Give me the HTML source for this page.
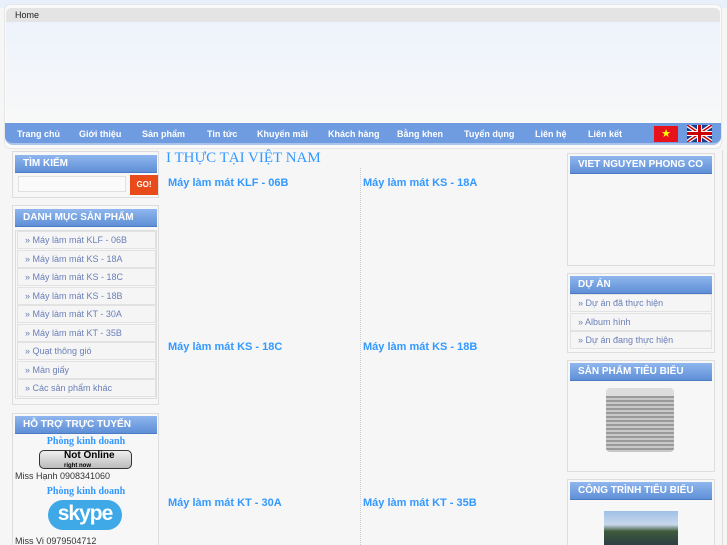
<!DOCTYPE html><html><head><meta charset="utf-8"><style>
*{margin:0;padding:0;box-sizing:border-box}
html,body{width:727px;height:545px;overflow:hidden}
body{background:#f6f6f6;font-family:"Liberation Sans",sans-serif;position:relative}
.a{position:absolute}
.hd{position:absolute;height:18px;background:linear-gradient(#8fb6ee,#5f8fd6);color:#fff;font-weight:bold;font-size:10px;padding:3px 0 0 8px;border-bottom:1px solid #4a7bc4}
.box{position:absolute;border:1px solid #ddd;background:#f7f7f7}
.it{position:absolute;height:18px;border:1px solid #e2e2e2;color:#6a7fb8;font-size:9px;padding:3px 0 0 7px;background:#f5f5f5}
.nav span{position:absolute;top:6px;color:#fff;font-size:9px;font-weight:bold}
.p{position:absolute;color:#3399ff;font-weight:bold;font-size:11px}
</style></head><body>
<div class="a" style="left:0;top:0;width:727px;height:8px;background:#e8f0fb"></div>
<div class="a" style="left:4px;top:4px;width:718px;height:145px;border:1px solid #e6e6e6;border-radius:6px;background:#fafafa"></div>
<div class="a" style="left:6px;top:8px;width:714px;height:14px;background:#e4e4e4;border-radius:5px 5px 0 0;font-size:9px;padding:2px 0 0 9px;color:#222">Home</div>
<div class="a" style="left:6px;top:22px;width:714px;height:100px;background:linear-gradient(#edf3fc,#f8f8f8)"></div>
<div class="a nav" style="left:5px;top:123px;width:716px;height:22px;background:#6f9be0;border-radius:0 0 8px 8px;border-bottom:2px solid #a9c3ea">
<span style="left:12px">Trang chủ</span><span style="left:74px">Giới thiệu</span><span style="left:137px">Sản phẩm</span><span style="left:202px">Tin tức</span><span style="left:252px">Khuyến mãi</span><span style="left:323px">Khách hàng</span><span style="left:392px">Bằng khen</span><span style="left:459px">Tuyển dụng</span><span style="left:530px">Liên hệ</span><span style="left:583px">Liên kết</span>
<div class="a" style="left:649px;top:3px;width:24px;height:16px;background:#e8121b;color:#ff0;font-size:11px;text-align:center;line-height:16px">★</div>
<svg class="a" style="left:682px;top:2px" width="25" height="17" viewBox="0 0 25 17"><rect width="25" height="17" fill="#1e3a8a"/><path d="M0 0L25 17M25 0L0 17" stroke="#fff" stroke-width="4"/><path d="M0 0L25 17M25 0L0 17" stroke="#c00" stroke-width="1.5"/><path d="M12.5 0V17M0 8.5H25" stroke="#fff" stroke-width="5"/><path d="M12.5 0V17M0 8.5H25" stroke="#c00" stroke-width="3"/></svg>
</div>
<div class="a" style="left:722px;top:150px;width:1px;height:395px;background:#ddd"></div>
<div class="box" style="left:12px;top:151px;width:147px;height:47px"></div>
<div class="hd" style="left:15px;top:155px;width:142px">TÌM KIẾM</div>
<div class="a" style="left:18px;top:176px;width:108px;height:16px;border:1px solid #e0e0e0;background:#fafafa"></div>
<div class="a" style="left:130px;top:175px;width:28px;height:20px;background:#e84a1a;color:#fff;font-size:8px;font-weight:bold;text-align:center;line-height:20px">GO!</div>
<div class="box" style="left:12px;top:205px;width:147px;height:200px"></div>
<div class="hd" style="left:15px;top:209px;width:142px">DANH MỤC SẢN PHẨM</div>
<div class="a" style="left:15px;top:230px;width:142px;height:169px;border:1px solid #ddd"></div>
<div class="it" style="left:17px;top:231px;width:139px">» Máy làm mát KLF - 06B</div>
<div class="it" style="left:17px;top:249.5px;width:139px">» Máy làm mát KS - 18A</div>
<div class="it" style="left:17px;top:268px;width:139px">» Máy làm mát KS - 18C</div>
<div class="it" style="left:17px;top:286.5px;width:139px">» Máy làm mát KS - 18B</div>
<div class="it" style="left:17px;top:305px;width:139px">» Máy làm mát KT - 30A</div>
<div class="it" style="left:17px;top:323.5px;width:139px">» Máy làm mát KT - 35B</div>
<div class="it" style="left:17px;top:342px;width:139px">» Quạt thông gió</div>
<div class="it" style="left:17px;top:360.5px;width:139px">» Màn giấy</div>
<div class="it" style="left:17px;top:379px;width:139px">» Các sản phẩm khác</div>
<div class="box" style="left:12px;top:413px;width:147px;height:140px"></div>
<div class="hd" style="left:15px;top:416px;width:142px">HỖ TRỢ TRỰC TUYẾN</div>
<div class="a" style="left:15px;top:436px;width:142px;text-align:center;font-family:'Liberation Serif',serif;font-weight:bold;font-size:10px;color:#3399ff">Phòng kinh doanh</div>
<div class="a" style="left:39px;top:450px;width:93px;height:19px;border:1px solid #333;border-radius:5px;background:linear-gradient(#eee,#bbb);font-size:10px;font-weight:bold;padding:0 0 0 24px;line-height:9px;color:#000">Not Online<br><span style="font-size:6px">right now</span></div>
<div class="a" style="left:15px;top:471px;font-size:9px;color:#333">Miss Hạnh 0908341060</div>
<div class="a" style="left:15px;top:486px;width:142px;text-align:center;font-family:'Liberation Serif',serif;font-weight:bold;font-size:10px;color:#3399ff">Phòng kinh doanh</div>
<div class="a" style="left:48px;top:500px;width:74px;height:30px;border-radius:15px;background:#3fa9e8;color:#fff;font-weight:bold;font-size:21px;text-align:center;line-height:28px;letter-spacing:-1px">skype</div>
<div class="a" style="left:15px;top:536px;font-size:9px;color:#333">Miss Vi 0979504712</div>
<div class="a" style="left:166px;top:150px;font-family:'Liberation Serif',serif;font-size:15px;color:#3399ff">I THỰC TẠI VIỆT NAM</div>
<div class="a" style="left:360px;top:168px;height:377px;border-left:1px dotted #ccc"></div>
<div class="p" style="left:168px;top:177px">Máy làm mát KLF - 06B</div>
<div class="p" style="left:363px;top:177px">Máy làm mát KS - 18A</div>
<div class="p" style="left:168px;top:341px">Máy làm mát KS - 18C</div>
<div class="p" style="left:363px;top:341px">Máy làm mát KS - 18B</div>
<div class="p" style="left:168px;top:497px">Máy làm mát KT - 30A</div>
<div class="p" style="left:363px;top:497px">Máy làm mát KT - 35B</div>
<div class="box" style="left:567px;top:153px;width:148px;height:113px"></div>
<div class="hd" style="left:570px;top:156px;width:142px">VIET NGUYEN PHONG CO</div>
<div class="box" style="left:567px;top:273px;width:148px;height:80px"></div>
<div class="hd" style="left:570px;top:276px;width:142px">DỰ ÁN</div>
<div class="it" style="left:570px;top:294px;width:142px">» Dự án đã thực hiện</div>
<div class="it" style="left:570px;top:312.5px;width:142px">» Album hình</div>
<div class="it" style="left:570px;top:331px;width:142px">» Dự án đang thực hiện</div>
<div class="box" style="left:567px;top:360px;width:148px;height:112px"></div>
<div class="hd" style="left:570px;top:363px;width:142px">SẢN PHẨM TIÊU BIỂU</div>
<div class="a" style="left:606px;top:388px;width:68px;height:64px;background:repeating-linear-gradient(#9a9a9a 0 2px,#c8c8c8 2px 4px);border-radius:4px;border-top:8px solid #ddd"></div>
<div class="box" style="left:567px;top:479px;width:148px;height:70px"></div>
<div class="hd" style="left:570px;top:482px;width:142px">CÔNG TRÌNH TIÊU BIỂU</div>
<div class="a" style="left:604px;top:511px;width:74px;height:34px;background:linear-gradient(#9fc0e6 0,#c8d8ec 40%,#3c5a3a 60%,#2e3e45)"></div>
</body></html>
